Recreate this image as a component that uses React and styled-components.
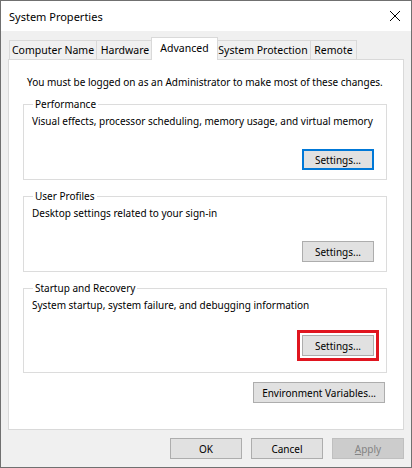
import React from 'react';
import styled, { createGlobalStyle, css } from 'styled-components';

const GlobalStyle = createGlobalStyle`
  html, body {
    margin: 0;
    padding: 0;
    background: #ffffff;
  }
  body {
    font-family: 'Noto Sans', 'Open Sans', sans-serif;
    font-size: 10px;
    color: #000000;
  }
`;

const Window = styled.div`
  width: 412px;
  height: 468px;
  box-sizing: border-box;
  border: 1px solid #707070;
  background: #f0f0f0;
  display: flex;
  flex-direction: column;
`;

const TitleBar = styled.div`
  height: 30px;
  flex: none;
  background: #ffffff;
  display: flex;
  align-items: center;
  justify-content: space-between;
  padding-left: 8px;
`;

const Title = styled.span`
  font-size: 11px;
`;

const CloseButton = styled.div`
  width: 30px;
  height: 30px;
  margin-right: 1px;
  display: flex;
  align-items: center;
  justify-content: center;
`;

const Body = styled.div`
  flex: 1;
  display: flex;
  flex-direction: column;
  padding: 7px 7px 0 7px;
`;

const TabRow = styled.div`
  display: flex;
  align-items: flex-end;
  height: 21px;
  padding-left: 2px;
  position: relative;
  z-index: 1;
`;

const Tab = styled.div`
  box-sizing: border-box;
  width: ${(p) => p.$width}px;
  height: 19px;
  display: flex;
  align-items: center;
  justify-content: center;
  border: 1px solid #d9d9d9;
  border-bottom: none;
  margin-left: -1px;
  background: #f0f0f0;
  white-space: nowrap;
  font-size: 10.5px;
  ${(p) =>
    p.$active &&
    css`
      width: ${p.$width + 4}px;
      margin: 0 -2px -1px -3px;
      padding-bottom: 3px;
      background: #ffffff;
      height: 23px;
      position: relative;
      z-index: 2;
    `}
`;

const Panel = styled.div`
  height: 371px;
  box-sizing: border-box;
  background: #ffffff;
  border: 1px solid #d9d9d9;
  padding: 14px 16px 0 14px;
  display: flex;
  flex-direction: column;
`;

const Notice = styled.div`
  padding-left: 4px;
  line-height: 16px;
  margin-bottom: 6px;
  white-space: nowrap;
`;

const Group = styled.fieldset`
  margin: 0 0 8px 0;
  border: 1px solid #dcdcdc;
  padding: 1px 12px ${(p) => (p.$highlight ? 16 : 9)}px 8px;
  display: flex;
  flex-direction: column;
  box-sizing: border-box;
`;

const Legend = styled.legend`
  padding: 0 2px;
  margin-left: 1px;
  line-height: 16px;
`;

const Description = styled.div`
  line-height: 16px;
  white-space: nowrap;
`;

const ButtonRow = styled.div`
  display: flex;
  justify-content: flex-end;
  padding-top: ${(p) => (p.$highlight ? 22 : 20)}px;
`;

const Button = styled.button`
  font: inherit;
  color: #000000;
  height: 21px;
  min-width: 72px;
  box-sizing: border-box;
  padding: 0 8px;
  background: #e1e1e1;
  border: 1px solid #adadad;
  border-radius: 0;
  ${(p) =>
    p.$focused &&
    css`
      border: 2px solid #0078d7;
    `}
  ${(p) =>
    p.$highlight &&
    css`
      outline: 3px solid #e0151f;
      outline-offset: 2px;
    `}
  ${(p) =>
    p.$disabled &&
    css`
      background: #cccccc;
      border-color: #bfbfbf;
      color: #838383;
    `}
`;

const EnvRow = styled.div`
  display: flex;
  justify-content: flex-end;
  padding-right: 2px;
  margin-top: 1px;
`;

const Footer = styled.div`
  flex: 1;
  display: flex;
  justify-content: flex-end;
  align-items: center;
  gap: 9px;
`;

const Underline = styled.span`
  text-decoration: underline;
`;

const tabs = [
  { label: 'Computer Name', width: 88 },
  { label: 'Hardware', width: 58 },
  { label: 'Advanced', width: 63 },
  { label: 'System Protection', width: 96 },
  { label: 'Remote', width: 47 },
];

const groups = [
  {
    title: 'Performance',
    text: 'Visual effects, processor scheduling, memory usage, and virtual memory',
    focused: true,
  },
  {
    title: 'User Profiles',
    text: 'Desktop settings related to your sign-in',
  },
  {
    title: 'Startup and Recovery',
    text: 'System startup, system failure, and debugging information',
    highlight: true,
  },
];

export default function App() {
  return (
    <>
      <GlobalStyle />
      <Window>
        <TitleBar>
          <Title>System Properties</Title>
          <CloseButton>
            <svg width="12" height="12" viewBox="0 0 12 12">
              <path d="M1 1L11 11M11 1L1 11" stroke="#000" strokeWidth="1" />
            </svg>
          </CloseButton>
        </TitleBar>
        <Body>
          <TabRow>
            {tabs.map((t) => (
              <Tab key={t.label} $width={t.width} $active={t.label === 'Advanced'}>
                {t.label}
              </Tab>
            ))}
          </TabRow>
          <Panel>
            <Notice>You must be logged on as an Administrator to make most of these changes.</Notice>
            {groups.map((g) => (
              <Group key={g.title} $highlight={g.highlight}>
                <Legend>{g.title}</Legend>
                <Description>{g.text}</Description>
                <ButtonRow $highlight={g.highlight}>
                  <Button $focused={g.focused} $highlight={g.highlight}>
                    Settings...
                  </Button>
                </ButtonRow>
              </Group>
            ))}
            <EnvRow>
              <Button>Environment Variables...</Button>
            </EnvRow>
          </Panel>
          <Footer>
            <Button>OK</Button>
            <Button>Cancel</Button>
            <Button $disabled>
              <Underline>A</Underline>pply
            </Button>
          </Footer>
        </Body>
      </Window>
    </>
  );
}
